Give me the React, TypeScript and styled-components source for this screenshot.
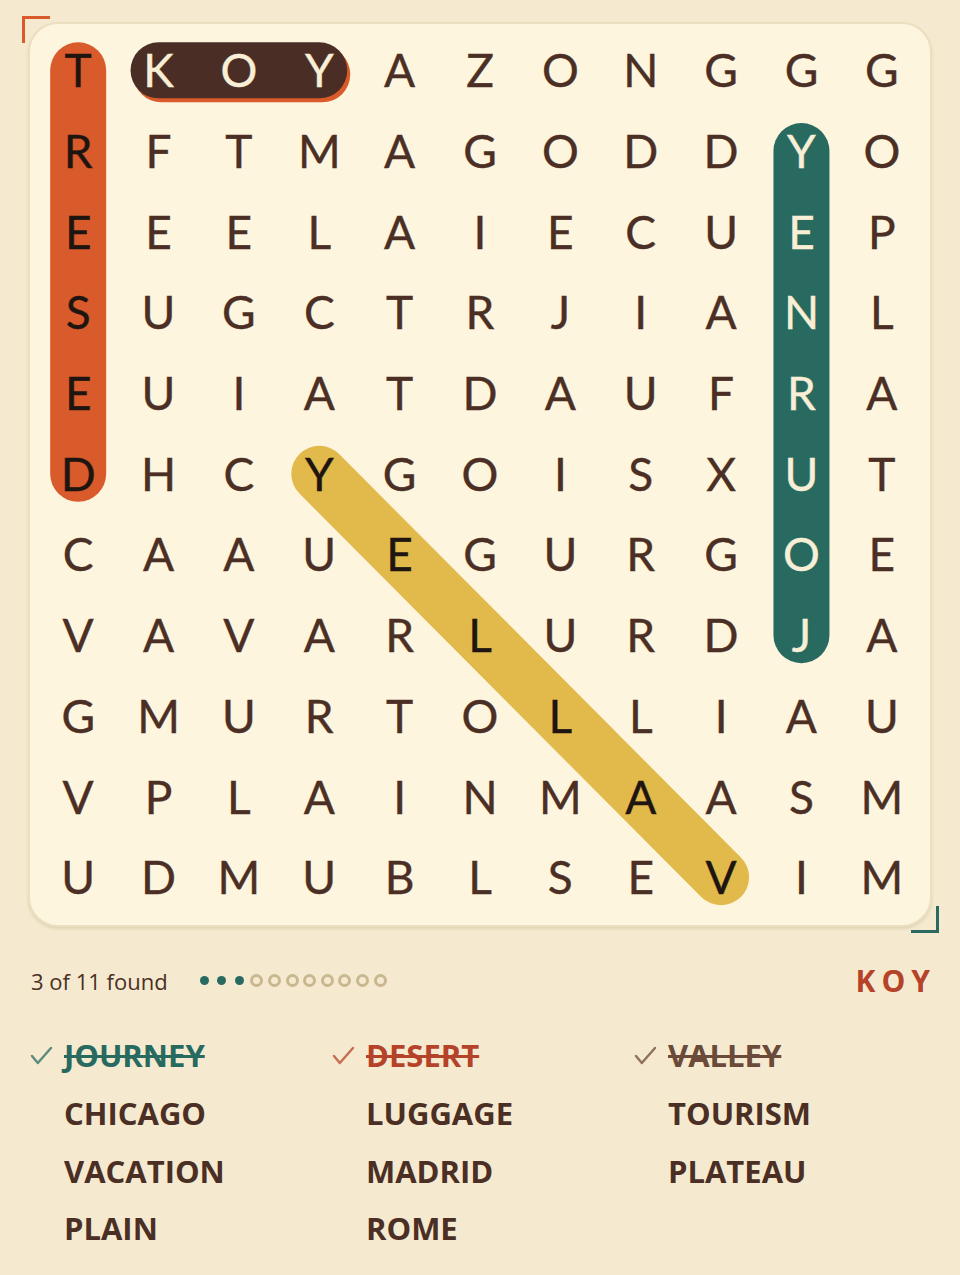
import React from 'react';
import styled, { createGlobalStyle } from 'styled-components';

const GlobalStyle = createGlobalStyle`
  html, body {
    margin: 0;
    background: #f5eacf;
  }
  body {
    font-family: "Open Sans", sans-serif;
    color: #4b2f25;
  }
`;

const Page = styled.div`
  width: 960px;
  min-height: 1275px;
  box-sizing: border-box;
  padding: 22px 28px 0 28px;
`;

const BoardWrap = styled.div`
  position: relative;
`;

const Board = styled.div`
  background: #fdf5de;
  border: 2px solid #ebdfc0;
  border-radius: 30px;
  padding: 6px 8px 7px 8px;
  box-shadow: 0 2px 3px rgba(140, 110, 60, 0.18);
`;

const Corner = styled.span<{ $pos: 'tl' | 'br' }>`
  position: absolute;
  width: 28px;
  height: 27px;
  box-sizing: border-box;
  ${(p) =>
    p.$pos === 'tl'
      ? `top: -6px; left: -6px; border-top: 3px solid #d95a2b; border-left: 3px solid #d95a2b;`
      : `bottom: -6px; right: -7px; border-bottom: 3px solid #2a6a60; border-right: 3px solid #2a6a60;`}
`;

const Grid = styled.div`
  position: relative;
  display: grid;
  grid-template-columns: repeat(11, 1fr);
  grid-auto-rows: 80.7px;
`;

const Marks = styled.svg`
  position: absolute;
  inset: 0;
  width: 100%;
  height: 100%;
  overflow: visible;
  pointer-events: none;
`;

type Tone = 'plain' | 'dark' | 'light';

const toneColor: Record<Tone, string> = {
  plain: '#4b2f25',
  dark: '#1f1510',
  light: '#f8efd6',
};

const Cell = styled.div<{ $tone: Tone }>`
  position: relative;
  z-index: 1;
  display: flex;
  align-items: center;
  justify-content: center;
  font-family: "Lato", sans-serif;
  font-size: 46px;
  font-weight: 400;
  line-height: 1;
  color: ${(p) => toneColor[p.$tone]};
  -webkit-text-stroke: 0.4px ${(p) => toneColor[p.$tone]};
`;

const Status = styled.div`
  display: flex;
  align-items: center;
  height: 40px;
  margin-top: 34px;
  padding: 0 2px 0 3px;
`;

const Count = styled.span`
  font-size: 22px;
  color: #4b2f25;
  margin-right: 30px;
`;

const Dots = styled.div`
  display: flex;
  gap: 4.6px;
  flex: 1;
`;

const Dot = styled.span<{ $on: boolean }>`
  width: 13px;
  height: 13px;
  display: flex;
  align-items: center;
  justify-content: center;
  &::after {
    content: '';
    box-sizing: border-box;
    border-radius: 50%;
    ${(p) =>
      p.$on
        ? `width: 9px; height: 9px; background: #286a60;`
        : `width: 13px; height: 13px; border: 3.5px solid #c9b78f; filter: blur(0.4px);`}
  }
`;

const Current = styled.span`
  font-size: 30px;
  font-weight: 700;
  letter-spacing: 6px;
  margin-right: -6px;
  color: #b5432a;
`;

const WordList = styled.div`
  display: grid;
  grid-template-columns: repeat(3, 302px);
  grid-auto-flow: column;
  grid-template-rows: repeat(4, 57.7px);
  margin-top: 26px;
  padding-left: 2px;
`;

const Word = styled.div`
  display: flex;
  align-items: center;
`;

const Check = styled.span`
  width: 34px;
  display: flex;
  align-items: center;
`;

const WordText = styled.span<{ $color?: string; $found?: boolean }>`
  font-size: 31px;
  font-weight: 700;
  color: ${(p) => p.$color || '#4b2f25'};
  text-decoration: ${(p) => (p.$found ? 'line-through' : 'none')};
  text-decoration-thickness: 3px;
`;

const rows = [
  'TKOYAZONGGG',
  'RFTMAGODDYO',
  'EEELAIECUEP',
  'SUGCTRJIANL',
  'EUIATDAUFRA',
  'DHCYGOISXUT',
  'CAAUEGURGOE',
  'VAVARLURDJA',
  'GMURTOLLIAU',
  'VPLAINMAASM',
  'UDMUBLSEVIM',
];

type Mark = {
  from: [number, number];
  to: [number, number];
  color: string;
  tone: Tone;
  shadow?: string;
};

const marks: Mark[] = [
  { from: [0, 0], to: [5, 0], color: '#d95a2b', tone: 'dark' },
  { from: [1, 9], to: [7, 9], color: '#286a60', tone: 'light' },
  { from: [5, 3], to: [10, 8], color: '#e2b94b', tone: 'dark' },
  { from: [0, 1], to: [0, 3], color: '#4a2e26', tone: 'light', shadow: '#d95a2b' },
];

const tones: Tone[][] = rows.map((r) => r.split('').map(() => 'plain' as Tone));
marks.forEach((m) => {
  const dr = Math.sign(m.to[0] - m.from[0]);
  const dc = Math.sign(m.to[1] - m.from[1]);
  let [r, c] = m.from;
  for (;;) {
    tones[r][c] = m.tone;
    if (r === m.to[0] && c === m.to[1]) break;
    r += dr;
    c += dc;
  }
});

const pct = (i: number) => `${((i + 0.5) / 11) * 100}%`;

const words: { text: string; found?: string }[] = [
  { text: 'JOURNEY', found: '#286a60' },
  { text: 'CHICAGO' },
  { text: 'VACATION' },
  { text: 'PLAIN' },
  { text: 'DESERT', found: '#b5432a' },
  { text: 'LUGGAGE' },
  { text: 'MADRID' },
  { text: 'ROME' },
  { text: 'VALLEY', found: '#6b4a3a' },
  { text: 'TOURISM' },
  { text: 'PLATEAU' },
];

const CheckIcon = ({ color }: { color: string }) => (
  <svg width="23" height="21" viewBox="0 0 23 21" fill="none">
    <path d="M2 11 L7.8 18 L21 3" stroke={color} strokeWidth="2.4" strokeLinecap="round" strokeLinejoin="round" opacity="0.75" />
  </svg>
);

const App: React.FC = () => {
  const foundCount = words.filter((w) => w.found).length;

  return (
    <Page>
      <GlobalStyle />
      <BoardWrap>
        <Corner $pos="tl" />
        <Board>
          <Grid>
            <Marks>
              {marks.map((m, i) => (
                <g key={i}>
                  {m.shadow && (
                    <line
                      x1={pct(m.from[1])}
                      y1={pct(m.from[0])}
                      x2={pct(m.to[1])}
                      y2={pct(m.to[0])}
                      stroke={m.shadow}
                      strokeWidth={56}
                      strokeLinecap="round"
                      transform="translate(3 4)"
                    />
                  )}
                  <line
                    x1={pct(m.from[1])}
                    y1={pct(m.from[0])}
                    x2={pct(m.to[1])}
                    y2={pct(m.to[0])}
                    stroke={m.color}
                    strokeWidth={56}
                    strokeLinecap="round"
                  />
                </g>
              ))}
            </Marks>
            {rows.map((row, r) =>
              row.split('').map((ch, c) => (
                <Cell key={`${r}-${c}`} $tone={tones[r][c]}>
                  {ch}
                </Cell>
              ))
            )}
          </Grid>
        </Board>
        <Corner $pos="br" />
      </BoardWrap>

      <Status>
        <Count>
          {foundCount} of {words.length} found
        </Count>
        <Dots>
          {words.map((_, i) => (
            <Dot key={i} $on={i < foundCount} />
          ))}
        </Dots>
        <Current>KOY</Current>
      </Status>

      <WordList>
        {words.map((w) => (
          <Word key={w.text}>
            <Check>{w.found && <CheckIcon color={w.found} />}</Check>
            <WordText $color={w.found} $found={!!w.found}>
              {w.text}
            </WordText>
          </Word>
        ))}
      </WordList>
    </Page>
  );
};

export default App;
